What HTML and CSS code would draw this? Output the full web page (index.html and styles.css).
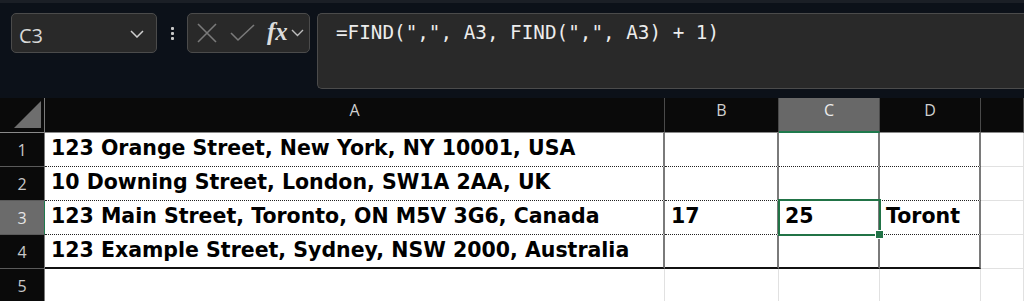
FILE: index.html
```html
<!DOCTYPE html>
<html lang="en">
<head>
    <meta charset="UTF-8">
    <title>Sheet</title>
    <link rel="stylesheet" href="styles.css">
</head>
<body>
    <div class="toolbar">
        <div class="name-box">
            <span>C3</span>
            <svg class="chev" width="14" height="8" viewBox="0 0 14 8"><path d="M1 1 L7 7 L13 1" fill="none" stroke="#cfcfcf" stroke-width="1.5"/></svg>
        </div>
        <div class="dots"><i></i><i></i><i></i></div>
        <div class="fx-box">
            <svg width="20" height="20" viewBox="0 0 20 20"><path d="M1 1 L19 19 M19 1 L1 19" stroke="#7a7a7a" stroke-width="1.6" fill="none"/></svg>
            <svg width="25" height="20" viewBox="0 0 25 20"><path d="M1 10 L8 17 L24 2" stroke="#7a7a7a" stroke-width="1.6" fill="none"/></svg>
            <span class="fx">fx</span>
            <svg width="13" height="8" viewBox="0 0 13 8"><path d="M1 1 L6.5 6.5 L12 1" fill="none" stroke="#bdbdbd" stroke-width="1.4"/></svg>
        </div>
        <div class="formula">=FIND(",", A3, FIND(",", A3) + 1)</div>
    </div>

    <div class="sheet">
        <div class="corner"><div class="tri"></div></div>
        <div class="colh">A</div>
        <div class="colh">B</div>
        <div class="colh active">C</div>
        <div class="colh">D</div>
        <div class="colh"></div>

        <div class="rowh">1</div>
        <div class="cell t">123 Orange Street, New York, NY 10001, USA</div>
        <div class="cell t"></div>
        <div class="cell t"></div>
        <div class="cell t"></div>
        <div class="cell"></div>

        <div class="rowh">2</div>
        <div class="cell t">10 Downing Street, London, SW1A 2AA, UK</div>
        <div class="cell t"></div>
        <div class="cell t"></div>
        <div class="cell t"></div>
        <div class="cell"></div>

        <div class="rowh active">3</div>
        <div class="cell t">123 Main Street, Toronto, ON M5V 3G6, Canada</div>
        <div class="cell t">17</div>
        <div class="cell t selected">25</div>
        <div class="cell t">Toront</div>
        <div class="cell"></div>

        <div class="rowh">4</div>
        <div class="cell t last">123 Example Street, Sydney, NSW 2000, Australia</div>
        <div class="cell t last"></div>
        <div class="cell t last"></div>
        <div class="cell t last"></div>
        <div class="cell"></div>

        <div class="rowh">5</div>
        <div class="cell"></div>
        <div class="cell"></div>
        <div class="cell"></div>
        <div class="cell"></div>
        <div class="cell"></div>
    </div>
</body>
</html>
```

FILE: styles.css
```css
body {
    margin: 0;
    background-color: #ffffff;
    font-family: "DejaVu Sans", sans-serif;
    overflow: hidden;
}
.toolbar {
    height: 98px;
    box-sizing: border-box;
    background-color: #0c1119;
    border-top: 3px solid #1b1f26;
    display: flex;
    align-items: flex-start;
    padding: 10px 0 0 11px;
}
.name-box {
    width: 146px;
    height: 40px;
    box-sizing: border-box;
    background-color: #292929;
    border: 1px solid #4b4b4b;
    border-radius: 5px;
    display: flex;
    align-items: center;
    justify-content: space-between;
    padding: 4px 12px 0 7px;
    color: #d8d8d8;
    font-family: "Open Sans", sans-serif;
    font-size: 20px;
}
.name-box .chev {
    margin-top: -3px;
}
.dots {
    width: 30px;
    height: 40px;
    display: flex;
    flex-direction: column;
    align-items: center;
    justify-content: center;
    gap: 2px;
}
.dots i {
    display: block;
    width: 3px;
    height: 3px;
    background-color: #c8c8c8;
    border-radius: 1px;
}
.fx-box {
    width: 123px;
    height: 40px;
    box-sizing: border-box;
    background-color: #292929;
    border: 1px solid #4b4b4b;
    border-radius: 5px;
    display: flex;
    align-items: center;
    padding: 0 0 0 9px;
}
.fx-box svg:nth-child(2) {
    margin-left: 13px;
}
.fx-box .fx {
    color: #dcdcdc;
    font-family: "Liberation Serif", serif;
    font-style: italic;
    font-weight: bold;
    font-size: 25px;
    margin-left: 12px;
    margin-right: 3px;
    margin-top: -3px;
}
.formula {
    margin-left: 7px;
    flex: 1;
    height: 76px;
    box-sizing: border-box;
    background-color: #292929;
    border: 1px solid #4b4b4b;
    border-right: none;
    border-radius: 5px 0 0 5px;
    padding: 7px 0 0 18px;
    color: #ececec;
    font-family: "DejaVu Sans Mono", monospace;
    font-size: 19.3px;
    white-space: pre;
}
.sheet {
    display: grid;
    grid-template-columns: 45px 620px 114px 101px 101px 1fr;
    grid-template-rows: 35px repeat(5, 34px);
}
.corner {
    background-color: #0a0a0a;
    border-right: 1px solid #7a7a7a;
    border-bottom: 1px solid #8a8a8a;
    position: relative;
}
.corner .tri {
    position: absolute;
    right: 3px;
    bottom: 4px;
    width: 27px;
    height: 27px;
    background-color: #6e6e6e;
    clip-path: polygon(100% 0, 100% 100%, 0 100%);
}
.colh {
    background-color: #0a0a0a;
    border-right: 1px solid #4a4a4a;
    border-bottom: 1px solid #8a8a8a;
    color: #d0d0d0;
    font-family: "Open Sans", sans-serif;
    font-size: 16px;
    text-align: center;
    padding-top: 1px;
    box-sizing: border-box;
}
.colh.active {
    background-color: #686868;
    border-bottom: 2px solid #1f7a4d;
    color: #ececec;
}
.rowh {
    background-color: #0a0a0a;
    border-right: 1px solid #7a7a7a;
    border-bottom: 1px solid #5a5a5a;
    color: #c8c8c8;
    font-family: "Open Sans", sans-serif;
    font-size: 16px;
    display: flex;
    align-items: center;
    justify-content: center;
    box-sizing: border-box;
}
.rowh.active {
    background-color: #6b6b6b;
    border-right: 1px solid #1f7a4d;
    color: #e6e6e6;
}
.cell {
    border-right: 1px solid #e1e1e1;
    border-bottom: 1px solid #e1e1e1;
    box-sizing: border-box;
    display: flex;
    align-items: center;
    padding: 0 0 3px 6px;
    font-weight: bold;
    font-size: 20.5px;
    color: #000;
    white-space: nowrap;
    overflow: hidden;
}
.cell.t {
    border-right: 2px solid #7a7a7a;
    border-bottom: 1px dotted #222;
}
.cell.last {
    border-bottom: 2px solid #111;
}
.cell.selected {
    overflow: visible;
    position: relative;
}
.cell.selected::before {
    content: "";
    position: absolute;
    left: -1px;
    top: -2px;
    right: -3px;
    bottom: -2px;
    border: 2px solid #217346;
}
.cell.selected::after {
    content: "";
    position: absolute;
    right: -6px;
    bottom: -5px;
    width: 7px;
    height: 7px;
    background-color: #217346;
    border: 1px solid #fff;
}
```
